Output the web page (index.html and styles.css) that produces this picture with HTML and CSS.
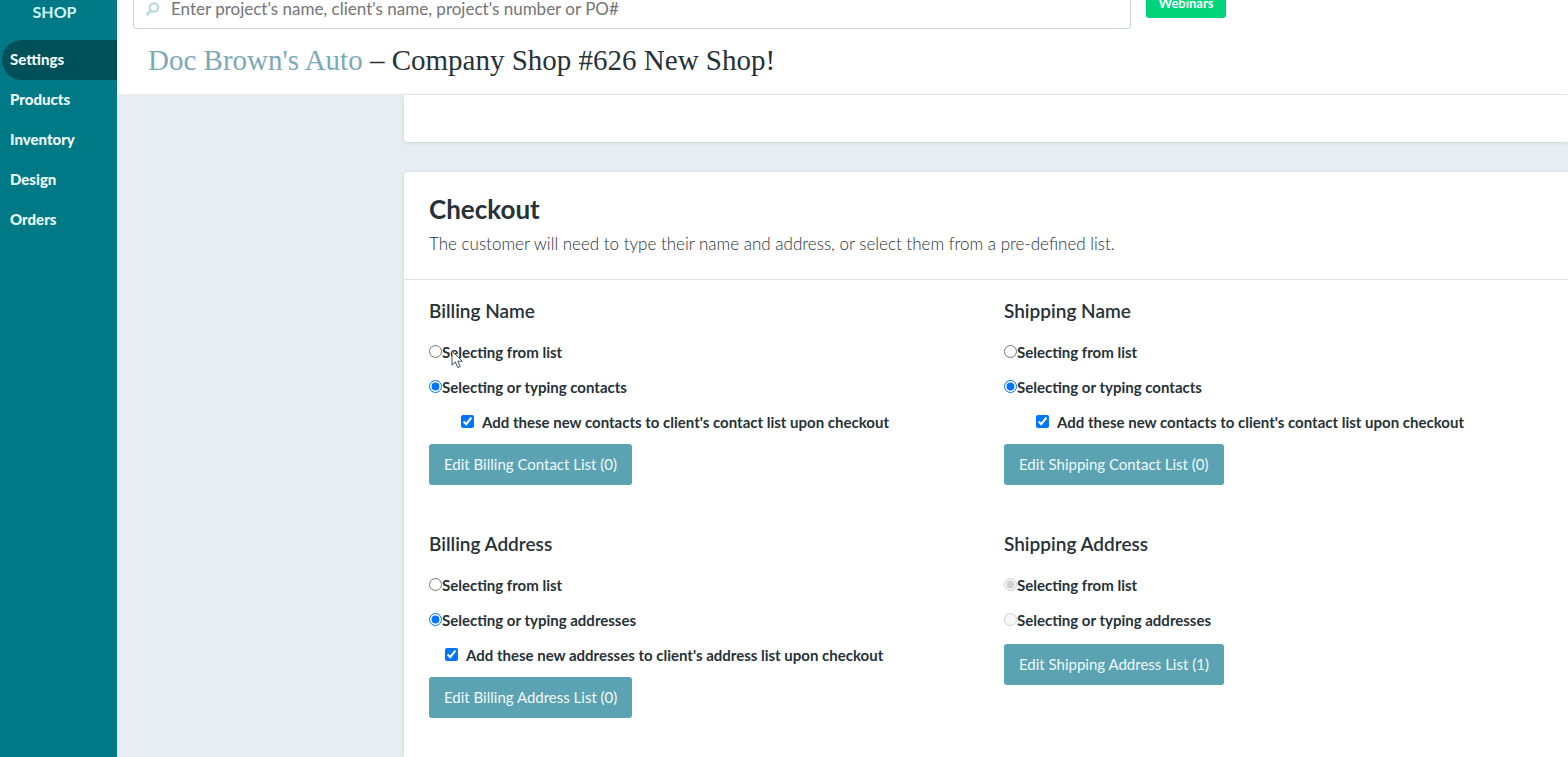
FILE: index.html
```
<!DOCTYPE html>
<html lang="en">

<head>
    <meta charset="utf-8" />
    <title>Shop Settings</title>
    <link rel="stylesheet" href="styles.css">
</head>

<body>
    <nav class="sidebar">
        <div class="sidebar-title">SHOP</div>
        <a class="active" href="#settings">Settings</a>
        <a href="#products">Products</a>
        <a href="#inventory">Inventory</a>
        <a href="#design">Design</a>
        <a href="#orders">Orders</a>
    </nav>

    <div class="page">
        <header class="header">
            <div class="topbar">
                <label class="search">
                    <svg width="14" height="14" viewBox="0 0 14 14" aria-hidden="true">
                        <circle cx="8" cy="5.5" r="4.2" fill="none" stroke="#bcd6e0" stroke-width="2.2" />
                        <path d="M5 8.7L1.6 12" stroke="#bcd6e0" stroke-width="2.8" stroke-linecap="round" />
                    </svg>
                    <input type="text" aria-label="Search projects" placeholder="Enter project's name, client's name, project's number or PO#">
                </label>
                <button class="webinars" type="button">Webinars</button>
            </div>
            <h1><a href="#company">Doc Brown's Auto</a> – Company Shop #626 New Shop!</h1>
        </header>

        <main class="content">
            <section class="card card-previous"></section>

            <section class="card card-checkout">
                <div class="card-head">
                    <h2>Checkout</h2>
                    <p>The customer will need to type their name and address, or select them from a pre-defined list.</p>
                </div>
                <form class="options">
                    <div class="group">
                        <h3>Billing Name</h3>
                        <label class="radio"><input type="radio" name="billing-name">Selecting from list
                            <svg class="pointer" width="12" height="19" viewBox="0 0 12 19" aria-hidden="true">
                                <path d="M1 1V15.2L4.3 12L6.8 17.6L9.2 16.5L6.8 11.2H11.2Z" fill="#fff" stroke="#4a4f5c" />
                            </svg>
                        </label>
                        <label class="radio"><input type="radio" name="billing-name" checked>Selecting or typing contacts</label>
                        <label class="check check-contacts"><input type="checkbox" checked>Add these new contacts to client's contact list upon checkout</label>
                        <button class="edit" type="button">Edit Billing Contact List (0)</button>
                    </div>

                    <div class="group">
                        <h3>Shipping Name</h3>
                        <label class="radio"><input type="radio" name="shipping-name">Selecting from list</label>
                        <label class="radio"><input type="radio" name="shipping-name" checked>Selecting or typing contacts</label>
                        <label class="check check-contacts"><input type="checkbox" checked>Add these new contacts to client's contact list upon checkout</label>
                        <button class="edit" type="button">Edit Shipping Contact List (0)</button>
                    </div>

                    <div class="group">
                        <h3>Billing Address</h3>
                        <label class="radio"><input type="radio" name="billing-address">Selecting from list</label>
                        <label class="radio"><input type="radio" name="billing-address" checked>Selecting or typing addresses</label>
                        <label class="check"><input type="checkbox" checked>Add these new addresses to client's address list upon checkout</label>
                        <button class="edit" type="button">Edit Billing Address List (0)</button>
                    </div>

                    <div class="group">
                        <h3>Shipping Address</h3>
                        <label class="radio"><input type="radio" name="shipping-address" checked disabled>Selecting from list</label>
                        <label class="radio"><input type="radio" name="shipping-address" disabled>Selecting or typing addresses</label>
                        <button class="edit" type="button">Edit Shipping Address List (1)</button>
                    </div>
                </form>
            </section>
        </main>
    </div>
</body>

</html>
```
FILE: styles.css
```
* {
    box-sizing: border-box;
}

body {
    display: flex;
    height: 100vh;
    margin: 0;
    overflow: hidden;
    font-family: Lato, "Open Sans", sans-serif;
    font-size: 15px;
    color: #263238;
    background-color: #e6eef1;
}

h1, h2, h3, p {
    margin: 0;
}

button, input {
    font-family: inherit;
}

.sidebar {
    flex: none;
    width: 117px;
    background-color: #007987;
}

.sidebar-title {
    height: 40px;
    padding-right: 8px;
    line-height: 23px;
    font-size: 16px;
    font-weight: bold;
    text-align: center;
    color: #d3f6f6;
}

.sidebar a {
    display: block;
    height: 40px;
    margin-left: 2px;
    padding-left: 8px;
    border-radius: 20px 0 0 20px;
    line-height: 38px;
    font-weight: 900;
    font-size: 15px;
    color: #eefcfc;
    text-decoration: none;
}

.sidebar a.active {
    background-color: #00505a;
}

.page {
    flex: 1;
    min-width: 0;
    display: flex;
    flex-direction: column;
}

.header {
    flex: none;
    background-color: #fff;
    border-bottom: 1px solid #e8ecee;
}

/* the top of the bar is scrolled out of view */
.topbar {
    display: flex;
    gap: 15px;
    margin-top: -12px;
    padding: 0 16px;
}

.search {
    flex: 0 1 998px;
    display: flex;
    align-items: center;
    height: 41px;
    padding-left: 12px;
    border: 1px solid #c9d3da;
    border-radius: 3px;
}

.search input {
    flex: 1;
    margin-left: 11px;
    padding: 0;
    border: 0;
    outline: 0;
    font-size: 17px;
    background: none;
}

.search input::placeholder {
    color: #757575;
}

.webinars {
    width: 80px;
    height: 30px;
    padding: 0;
    border: 0;
    border-radius: 3px;
    font-size: 13px;
    font-weight: bold;
    color: #fff;
    background-color: #00d47b;
}

.header h1 {
    padding: 11px 31px 13px;
    font-family: "Liberation Serif", serif;
    font-size: 29px;
    font-weight: normal;
    line-height: 41px;
}

.header h1 a {
    color: #7aa9b8;
    text-decoration: none;
}

.content {
    flex: 1;
    min-height: 0;
    display: flex;
    flex-direction: column;
    gap: 30px;
    padding-left: 287px;
}

.card {
    background-color: #fff;
    box-shadow: 0 1px 4px rgba(0, 50, 60, 0.12);
}

.card-previous {
    flex: none;
    height: 47px;
    border-bottom-left-radius: 4px;
}

.card-checkout {
    flex: 1;
    border-top-left-radius: 4px;
}

.card-head {
    padding: 22px 25px 24px;
    border-bottom: 1px solid #dfe3e4;
}

.card-head h2 {
    font-size: 26px;
    line-height: 30px;
}

.card-head p {
    margin-top: 9px;
    font-size: 17px;
    font-weight: 300;
    line-height: 22px;
}

.options {
    display: grid;
    grid-template-columns: 1fr 1fr;
    gap: 47px 11px;
    padding: 19px 0 24px 25px;
}

.group h3 {
    margin-bottom: 12px;
    font-size: 19px;
    font-weight: 600;
    line-height: 24px;
}

.radio,
.check {
    position: relative;
    display: block;
    width: fit-content;
    line-height: 35px;
    font-size: 15px;
    font-weight: bold;
}

.radio input,
.check input {
    margin: 0;
}

.check {
    height: 33px;
    padding-left: 16px;
}

.check-contacts {
    padding-left: 32px;
}

.check input {
    margin-right: 8px;
}

.pointer {
    position: absolute;
    left: 22px;
    top: 15px;
}

.edit {
    display: block;
    height: 41px;
    margin-top: 6px;
    padding: 0 15px;
    border: 0;
    border-radius: 3px;
    font-size: 15px;
    line-height: 39px;
    color: #effafa;
    background-color: #5ba2b3;
}
```
